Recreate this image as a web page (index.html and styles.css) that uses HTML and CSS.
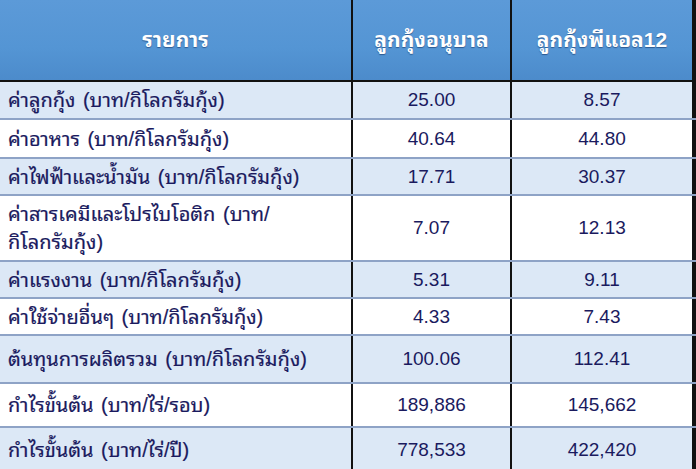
FILE: index.html
```html
<!DOCTYPE html>
<html lang="th">
<head>
<meta charset="utf-8">
<link rel="stylesheet" href="styles.css">
</head>
<body>
<div class="table">
  <div class="row head">
    <div class="cell">รายการ</div>
    <div class="cell">ลูกกุ้งอนุบาล</div>
    <div class="cell">ลูกกุ้งพีแอล12</div>
  </div>
  <div class="row alt h38">
    <div class="cell label">ค่าลูกกุ้ง (บาท/กิโลกรัมกุ้ง)</div>
    <div class="cell">25.00</div>
    <div class="cell">8.57</div>
  </div>
  <div class="row h39">
    <div class="cell label">ค่าอาหาร (บาท/กิโลกรัมกุ้ง)</div>
    <div class="cell">40.64</div>
    <div class="cell">44.80</div>
  </div>
  <div class="row alt h37">
    <div class="cell label">ค่าไฟฟ้าและน้ำมัน (บาท/กิโลกรัมกุ้ง)</div>
    <div class="cell">17.71</div>
    <div class="cell">30.37</div>
  </div>
  <div class="row h66">
    <div class="cell label">ค่าสารเคมีและโปรไบโอติก (บาท/<br>กิโลกรัมกุ้ง)</div>
    <div class="cell">7.07</div>
    <div class="cell">12.13</div>
  </div>
  <div class="row alt h37">
    <div class="cell label">ค่าแรงงาน (บาท/กิโลกรัมกุ้ง)</div>
    <div class="cell">5.31</div>
    <div class="cell">9.11</div>
  </div>
  <div class="row h37">
    <div class="cell label">ค่าใช้จ่ายอื่นๆ (บาท/กิโลกรัมกุ้ง)</div>
    <div class="cell">4.33</div>
    <div class="cell">7.43</div>
  </div>
  <div class="row alt h48">
    <div class="cell label">ต้นทุนการผลิตรวม (บาท/กิโลกรัมกุ้ง)</div>
    <div class="cell">100.06</div>
    <div class="cell">112.41</div>
  </div>
  <div class="row h44">
    <div class="cell label">กำไรขั้นต้น (บาท/ไร่/รอบ)</div>
    <div class="cell">189,886</div>
    <div class="cell">145,662</div>
  </div>
  <div class="row alt h44 last">
    <div class="cell label">กำไรขั้นต้น (บาท/ไร่/ปี)</div>
    <div class="cell">778,533</div>
    <div class="cell">422,420</div>
  </div>
</div>
</body>
</html>
```
FILE: styles.css
```css
html, body {
  margin: 0;
  padding: 0;
  background: #ffffff;
}
body {
  width: 696px;
  height: 469px;
  overflow: hidden;
  font-family: "Liberation Sans", "Noto Sans Thai Looped", "Noto Looped Thai", "Tahoma", "Noto Sans Thai", sans-serif;
  color: #1a1a5e;
}
.table {
  display: flex;
  flex-direction: column;
  width: 696px;
}
.row {
  display: grid;
  grid-template-columns: 353px 159px 184px;
  box-sizing: border-box;
  border-bottom: 2px solid #8ea3c6;
}
.cell {
  box-sizing: border-box;
  display: flex;
  align-items: center;
  justify-content: center;
  border-right: 2px solid #111111;
  font-size: 19px;
  line-height: 28px;
}
.cell:last-child {
  border-right: 4px solid #111111;
}
.cell.label {
  justify-content: flex-start;
  padding-left: 8px;
  font-size: 20px;
  word-spacing: 2px;
  -webkit-text-stroke: 0.2px #1a1a5e;
}
.head {
  height: 82px;
  border-bottom: 2px solid #111111;
  background: linear-gradient(to bottom, #5c9ad8 0%, #5495d4 60%, #4c8bcb 100%);
}
.head .cell {
  color: #ffffff;
  font-weight: bold;
  font-size: 21px;
  text-shadow: 0 1px 1px rgba(20, 50, 100, 0.6);
}
.alt {
  background: #dce8f6;
}
.h37 { height: 37px; }
.h38 { height: 38px; }
.h39 { height: 39px; }
.h44 { height: 44px; }
.h48 { height: 48px; }
.h66 { height: 66px; }
.last { border-bottom: none; }
```
